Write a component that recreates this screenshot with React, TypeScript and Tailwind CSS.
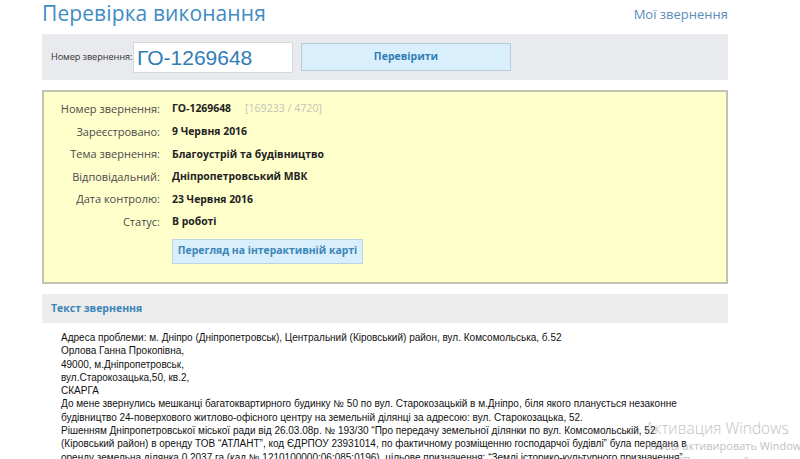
import React from "react";

const rows: { label: string; value: string; extra?: string }[] = [
  { label: "Номер звернення:", value: "ГО-1269648", extra: "[169233 / 4720]" },
  { label: "Зареєстровано:", value: "9 Червня 2016" },
  { label: "Тема звернення:", value: "Благоустрій та будівництво" },
  { label: "Відповідальний:", value: "Дніпропетровський МВК" },
  { label: "Дата контролю:", value: "23 Червня 2016" },
  { label: "Статус:", value: "В роботі" },
];

const bodyLines = [
  "Адреса проблеми: м. Дніпро (Дніпропетровськ), Центральний (Кіровський) район, вул. Комсомольська, б.52",
  "Орлова Ганна Прокопівна,",
  "49000, м.Дніпропетровськ,",
  "вул.Старокозацька,50, кв.2,",
  "СКАРГА",
  "До мене звернулись мешканці багатоквартирного будинку № 50 по вул. Старокозацькій в м.Дніпро, біля якого планується незаконне",
  "будівництво 24-поверхового житлово-офісного центру на земельній ділянці за адресою: вул. Старокозацька, 52.",
  "Рішенням Дніпропетровської міської ради від 26.03.08р. № 193/30 “Про передачу земельної ділянки по вул. Комсомольській, 52",
  "(Кіровський район) в оренду ТОВ “АТЛАНТ”, код ЄДРПОУ 23931014, по фактичному розміщенню господарчої будівлі” була передана в",
  "оренду земельна ділянка 0,2037 га (кад № 1210100000:06:085:0196), цільове призначення: “Землі історико-культурного призначення”,",
];

export default function App() {
  return (
    <div className="relative w-[800px] h-[459px] overflow-hidden bg-white" style={{ fontFamily: '"Open Sans", "Noto Sans", sans-serif' }}>
      <div className="ml-[42px] w-[686px]">
        <div className="flex items-start justify-between h-[34px]">
          <h1 className="text-[21px] leading-[26px] text-[#3f8cc3] tracking-[0.1px]">Перевірка виконання</h1>
          <a className="text-[13px] leading-[18px] mt-[5px] text-[#5b8db8]">Мої звернення</a>
        </div>

        <div className="h-[46px] bg-[#e9eaed] flex items-center pl-[9px]">
          <span className="w-[77px] text-[9.2px] text-[#333] tracking-[-0.1px] whitespace-nowrap">Номер звернення:</span>
          <div className="ml-[5px] w-[160px] h-[31px] bg-white border border-[#d6d9de] flex items-center pl-[3px]">
            <span className="text-[21px] leading-none text-[#2f7db6]" style={{ fontFamily: '"Liberation Sans", Arial, sans-serif' }}>ГО-1269648</span>
          </div>
          <button className="ml-[8px] w-[210px] h-[28px] bg-[#d9effb] border border-[#b7cbd8] text-[10.5px] font-bold text-[#2f7db6]">Перевірити</button>
        </div>

        <div className="mt-[10px] h-[194px] bg-[#ffffcc] border-2 border-[#c3c3b3] pt-[6px]">
          {rows.map((r) => (
            <div key={r.label} className="flex items-center h-[22.6px]">
              <div className="w-[116px] text-right text-[11px] text-[#4a4a4a] whitespace-nowrap">{r.label}</div>
              <div className="ml-[12px] text-[10.4px] font-bold text-[#222] whitespace-nowrap">
                {r.value}
                {r.extra && <span className="ml-[14px] text-[10.6px] font-normal text-[#c4c4b8]">{r.extra}</span>}
              </div>
            </div>
          ))}
          <div className="ml-[128px] mt-[5px] w-[191px] h-[25px] bg-[#d9effb] border border-[#b9d6e6] flex items-center justify-center">
            <span className="text-[10.4px] font-bold text-[#3b85b8] whitespace-nowrap">Перегляд на інтерактивній карті</span>
          </div>
        </div>

        <div className="mt-[10px] h-[29px] bg-[#ececec] flex items-center pl-[9px]">
          <span className="text-[10.5px] font-bold text-[#3b85b8]">Текст звернення</span>
        </div>

        <div className="pl-[19px] pt-[8px] text-[10px] leading-[13.3px] text-[#111] whitespace-nowrap" style={{ fontFamily: '"Liberation Sans", Arial, sans-serif' }}>
          {bodyLines.map((l, i) => (
            <div key={i}>{l}</div>
          ))}
        </div>
      </div>

      <div className="absolute left-[645px] top-[419px] pointer-events-none text-[#a8a8a8] opacity-70 whitespace-nowrap" style={{ fontFamily: '"Open Sans", "Noto Sans", sans-serif' }}>
        <div className="text-[15.5px] leading-[19px] font-light">Активация Windows</div>
        <div className="text-[11px] leading-[15px]">Чтобы активировать Windows, перейдите в раздел</div>
        <div className="ml-[33px] text-[11px] leading-[15px]">"Параметры".</div>
      </div>
    </div>
  );
}
